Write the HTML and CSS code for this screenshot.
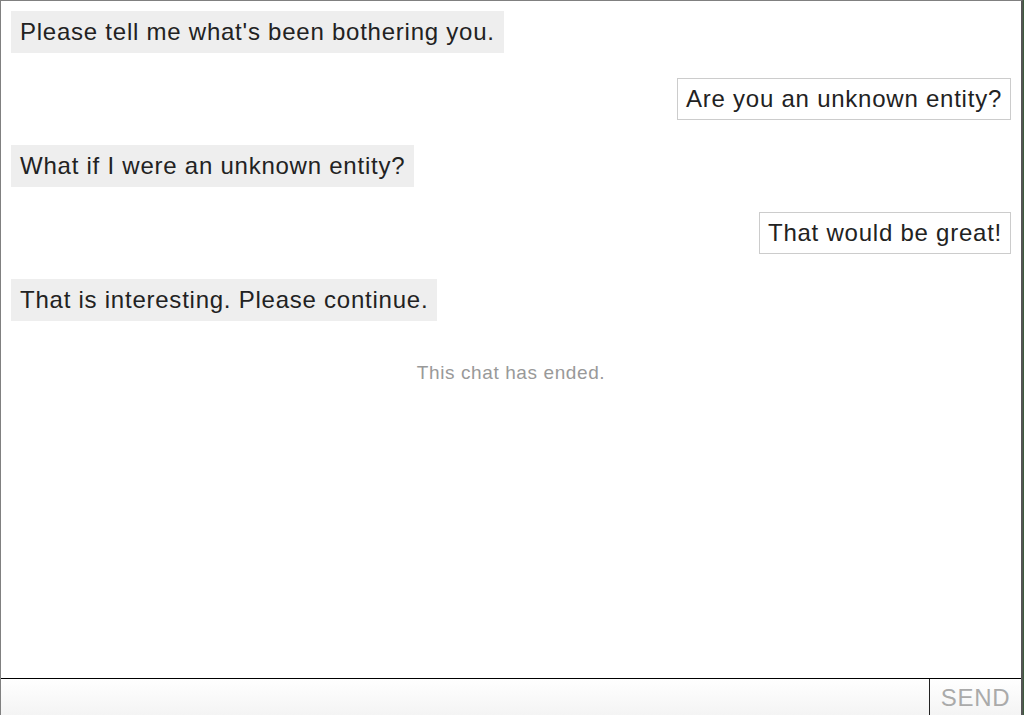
FILE: index.html
```html
<!DOCTYPE html>
<html lang="en">
  <head>
    <meta charset="UTF-8" />
    <meta name="viewport" content="width=device-width, initial-scale=1.0" />
    <title>Chat</title>
    <link rel="stylesheet" href="styles.css">
  </head>
  <body>
    <div class="app">
      <div class="log">
        <div class="msg bot">Please tell me what's been bothering you.</div>
        <div class="msg user">Are you an unknown entity?</div>
        <div class="msg bot">What if I were an unknown entity?</div>
        <div class="msg user">That would be great!</div>
        <div class="msg bot">That is interesting. Please continue.</div>
        <p class="ended">This chat has ended.</p>
      </div>
      <form class="composer">
        <input type="text" class="entry" disabled />
        <button type="button" class="send" disabled>SEND</button>
      </form>
    </div>
  </body>
</html>
```

FILE: styles.css
```css
html {
  background: #3d5a3d;
}

body {
  margin: 0;
  font-family: "Liberation Sans", Arial, sans-serif;
  color: #222;
}

.app {
  width: 1023px;
  height: 715px;
  box-sizing: border-box;
  border-left: 1px solid #808080;
  border-top: 1px solid #808080;
  border-right: 2px solid #555;
  background: #fff;
  display: flex;
  flex-direction: column;
}

.log {
  flex: 1;
  display: flex;
  flex-direction: column;
  align-items: flex-start;
  gap: 25px;
  padding: 10px 10px 0 10px;
}

.msg {
  font-size: 24px;
  letter-spacing: 0.76px;
  line-height: 26px;
  padding: 8px 9px;
  box-sizing: border-box;
  height: 42px;
  white-space: nowrap;
}

.bot {
  background: #eee;
}

.user {
  align-self: flex-end;
  background: #fff;
  border: 1px solid #ccc;
  padding: 7px 8px;
}

.ended {
  align-self: center;
  margin: 16px 0 0 0;
  font-size: 19px;
  letter-spacing: 0.6px;
  color: #999;
}

.composer {
  display: flex;
  height: 36px;
  border-top: 1px solid #000;
  background: linear-gradient(#fff, #f4f4f4);
}

.entry {
  flex: 1;
  border: none;
  background: transparent;
  margin: 0;
  padding: 0 10px;
}

.send {
  width: 92px;
  border: none;
  border-left: 1px solid #222;
  background: transparent;
  font-family: "Liberation Sans", Arial, sans-serif;
  font-size: 24px;
  letter-spacing: 0.7px;
  color: #aaa;
  padding: 2px 0 0 0;
  text-align: center;
}
```
